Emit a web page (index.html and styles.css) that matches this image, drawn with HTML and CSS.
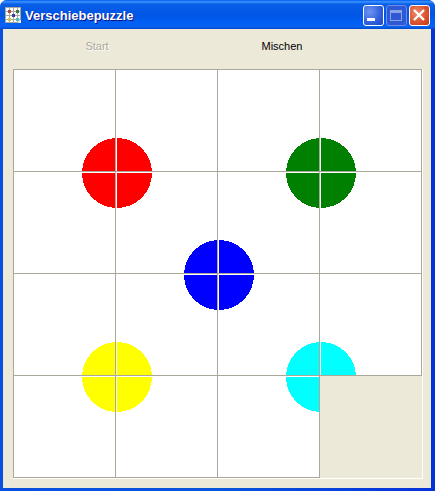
FILE: index.html
```html
<!DOCTYPE html>
<html lang="de">
	<head>
		<title>Verschiebepuzzle</title>
		<link rel="stylesheet" href="styles.css">
	</head>
	<body>
		<div class="window">
			<div class="titlebar">
				<svg class="app-icon" width="16" height="16" viewBox="0 0 16 16" shape-rendering="crispEdges">
					<rect width="16" height="16" fill="#fff"/>
					<path d="M0 .5H16M0 4.5H16M0 8.5H16M0 12.5H16M0 15.5H12M.5 0V16M4.5 0V16M8.5 0V16M12.5 0V16M15.5 0V12" stroke="#aca899" fill="none"/>
					<rect x="13" y="13" width="3" height="3" fill="#ece9d8"/>
					<rect x="3" y="3" width="3" height="3" fill="#b04848"/>
					<rect x="11" y="3" width="3" height="3" fill="#3f7a3f"/>
					<rect x="7" y="7" width="3" height="3" fill="#3a3aa8"/>
					<rect x="3" y="11" width="3" height="3" fill="#c8c85a"/>
					<rect x="11" y="11" width="3" height="3" fill="#4ac0c0"/>
				</svg>
				<span class="title">Verschiebepuzzle</span>
				<div class="caption-buttons">
					<div class="caption-btn">
						<svg width="21" height="21" viewBox="0 0 21 21" shape-rendering="crispEdges"><rect x="4" y="13" width="8" height="3" fill="#fff"/></svg>
					</div>
					<div class="caption-btn disabled">
						<svg width="21" height="21" viewBox="0 0 21 21" shape-rendering="crispEdges"><path d="M4.5 6.5H15.5V15.5H4.5Z" fill="none" stroke="#8aa2e8"/><rect x="4" y="5" width="12" height="3" fill="#8aa2e8"/></svg>
					</div>
					<div class="caption-btn close">
						<svg width="21" height="21" viewBox="0 0 21 21"><path d="M5 5L15 15M15 5L5 15" stroke="#fff" stroke-width="2.4" fill="none"/></svg>
					</div>
				</div>
			</div>
			<div class="client">
				<div class="toolbar">
					<button class="tool-btn" disabled>Start</button>
					<button class="tool-btn">Mischen</button>
				</div>
				<div class="board">
					<svg class="picture" width="409" height="409" viewBox="0 0 409 409" shape-rendering="crispEdges">
						<circle cx="104" cy="104" r="35" fill="#f00"/>
						<circle cx="308" cy="104" r="35" fill="#008000"/>
						<circle cx="206" cy="206" r="35" fill="#00f"/>
						<circle cx="104" cy="308" r="35" fill="#ff0"/>
						<circle cx="308" cy="308" r="35" fill="#0ff"/>
					</svg>
					<div class="tile"></div>
					<div class="tile"></div>
					<div class="tile"></div>
					<div class="tile last-col"></div>
					<div class="tile"></div>
					<div class="tile"></div>
					<div class="tile"></div>
					<div class="tile last-col"></div>
					<div class="tile"></div>
					<div class="tile"></div>
					<div class="tile"></div>
					<div class="tile last-col"></div>
					<div class="tile last-row"></div>
					<div class="tile last-row"></div>
					<div class="tile last-row"></div>
					<div class="tile empty"></div>
				</div>
			</div>
		</div>
	</body>
</html>
```

FILE: styles.css
```css
html, body {
	margin: 0;
	height: 100%;
	overflow: hidden;
}

body {
	background-color: #fff;
	font-family: "Liberation Sans", Arial, sans-serif;
}

.window {
	display: flex;
	flex-direction: column;
	height: 491px;
	width: 435px;
	box-sizing: border-box;
	background: linear-gradient(to right, #0a4fe0 0%, #0855dd 50%, #0831d9 100%);
	border-radius: 7px 7px 0 0;
	overflow: hidden;
}

.titlebar {
	display: flex;
	align-items: center;
	height: 29px;
	flex-shrink: 0;
	padding: 1px 5px 0 5px;
	box-sizing: border-box;
	background: linear-gradient(to bottom, #0058ee 0%, #3a93ff 6%, #0a5fe8 14%, #0055e5 50%, #0060f5 80%, #0a62f0 92%, #0049cf 100%);
}

.app-icon {
	flex-shrink: 0;
	margin-right: 4px;
}

.title {
	flex: 1;
	color: #fff;
	font-size: 13px;
	font-weight: bold;
	padding-top: 1px;
	text-shadow: 1px 1px 0 #0f1089;
}

.caption-buttons {
	display: flex;
	gap: 2px;
}

.caption-btn {
	width: 21px;
	height: 21px;
	box-sizing: border-box;
	border: 1px solid #fff;
	border-radius: 3px;
	background: radial-gradient(circle at 30% 30%, #6f94f0 0%, #2f5fdc 60%, #1f45c0 100%);
	overflow: hidden;
}

.caption-btn svg {
	display: block;
	margin: -1px;
}

.caption-btn.disabled {
	border-color: #6f8ce4;
	background: #2f59d4;
}

.caption-btn.close {
	background: radial-gradient(circle at 35% 35%, #ee8a68 0%, #d9512c 60%, #c03a18 100%);
}

.client {
	flex: 1;
	margin: 0 4px 3px 3px;
	background-color: #ece9d8;
	display: flex;
	flex-direction: column;
	padding: 0 0 0 10px;
}

.toolbar {
	display: grid;
	grid-template-columns: 168px 202px;
	height: 40px;
}

.tool-btn {
	border: none;
	background: none;
	padding: 0;
	font-family: inherit;
	font-size: 11px;
	color: #000;
	height: 34px;
}

.tool-btn:disabled {
	color: #aca899;
	text-shadow: 1px 1px 0 #fff;
}

.board {
	position: relative;
	display: grid;
	grid-template-columns: 102px 102px 102px 103px;
	grid-template-rows: 102px 102px 102px 103px;
	width: 410px;
	height: 410px;
	box-sizing: border-box;
	background-color: #fff;
	border-right: 1px solid #fff;
	border-bottom: 1px solid #fff;
}

.picture {
	position: absolute;
	left: 0;
	top: 0;
}

.tile {
	position: relative;
	box-sizing: border-box;
	border-top: 1px solid #aca899;
	border-left: 1px solid #aca899;
	box-shadow: inset 1px 1px 0 #fff;
}

.tile.last-col {
	border-right: 1px solid #aca899;
}

.tile.last-row {
	border-bottom: 1px solid #aca899;
}

.tile.empty {
	background-color: #ece9d8;
	box-shadow: none;
}
```
